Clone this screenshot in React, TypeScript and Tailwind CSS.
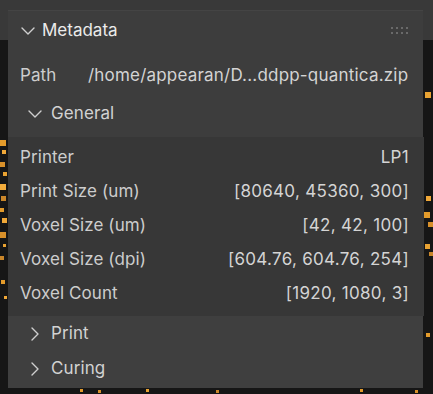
import React from 'react';

const specks: [number, number, number, string][] = [
  // left strip
  [0, 140, 6, '#e39b2b'], [2, 150, 4, '#f0a838'], [0, 162, 5, '#d8902a'], [3, 172, 4, '#e8a232'],
  [0, 184, 6, '#f2ac3c'], [1, 196, 5, '#c9862a'], [0, 208, 4, '#e39b2b'], [2, 218, 5, '#f0a838'],
  [0, 232, 6, '#d8902a'], [3, 244, 3, '#e8a232'], [0, 256, 4, '#c9862a'], [1, 280, 4, '#e39b2b'],
  [4, 296, 3, '#f0a838'],
  // right strip
  [425, 92, 6, '#e8a232'], [426, 196, 5, '#f0a838'], [424, 212, 6, '#e39b2b'], [428, 222, 5, '#d8902a'],
  [425, 244, 5, '#e8a232'], [429, 252, 4, '#c9862a'], [426, 333, 4, '#e39b2b'],
  // bottom
  [80, 389, 3, '#e39b2b'], [98, 390, 3, '#d8902a'], [146, 389, 3, '#e8a232'], [216, 390, 3, '#c9862a'],
  [360, 389, 3, '#e39b2b'], [415, 390, 3, '#d8902a'],
];

function Chevron({ open }: { open: boolean }) {
  return open ? (
    <svg width="14" height="8" viewBox="0 0 14 8" className="shrink-0">
      <path d="M1 1 L7 7 L13 1" fill="none" stroke="#cfcfcf" strokeWidth="1.4" strokeLinecap="round" strokeLinejoin="round" />
    </svg>
  ) : (
    <svg width="8" height="14" viewBox="0 0 8 14" className="shrink-0">
      <path d="M1 1 L7 7 L1 13" fill="none" stroke="#cfcfcf" strokeWidth="1.4" strokeLinecap="round" strokeLinejoin="round" />
    </svg>
  );
}

function Grip() {
  return (
    <div className="grid grid-cols-4 gap-x-[3px] gap-y-[3px]">
      {Array.from({ length: 8 }).map((_, i) => (
        <div key={i} className="w-[2px] h-[2px] rounded-full bg-[#7a7a7a]" />
      ))}
    </div>
  );
}

const rows: [string, string][] = [
  ['Printer', 'LP1'],
  ['Print Size (um)', '[80640, 45360, 300]'],
  ['Voxel Size (um)', '[42, 42, 100]'],
  ['Voxel Size (dpi)', '[604.76, 604.76, 254]'],
  ['Voxel Count', '[1920, 1080, 3]'],
];

export default function App() {
  return (
    <div
      className="relative w-[433px] h-[394px] overflow-hidden bg-[#161616] text-[17px] tracking-[0.1px] text-[#d2d2d2]"
      style={{ fontFamily: 'Inter, "Noto Sans", sans-serif' }}
    >
      {/* viewport header strip */}
      <div className="absolute left-0 top-0 w-[433px] h-[40px] bg-[#393939]" />
      {specks.map(([x, y, s, c], i) => (
        <div key={i} className="absolute" style={{ left: x, top: y, width: s, height: s, backgroundColor: c }} />
      ))}

      <div className="relative pt-[10px] pl-[8px] pr-[10px]">
        <div className="flex flex-col bg-[#3d3d3d] h-[378px]">
          {/* Header */}
          <div className="h-[40px] flex items-center pl-[13px] pr-[15px] border-t border-[#444444]">
            <Chevron open />
            <span className="ml-[7px] text-[17px] tracking-normal text-[#ebebeb]">Metadata</span>
            <div className="ml-auto">
              <Grip />
            </div>
          </div>

          <div className="pt-[7px] pb-[4px]">
            <div className="h-[38px] flex items-center pl-[12px]">
              <span className="w-[68px] text-[#cdcdcd]">Path</span>
              <span className="text-[#d4d4d4] tracking-[0.2px]">/home/appearan/D...ddpp-quantica.zip</span>
            </div>
            <div className="h-[38px] flex items-center pl-[20px]">
              <Chevron open />
              <span className="ml-[9px] text-[#d2d2d2]">General</span>
            </div>
          </div>

          <div className="bg-[#373737] pt-[4px] pb-[5px] mr-[-1px]">
            {rows.map(([k, v]) => (
              <div key={k} className="h-[34px] flex items-center justify-between pl-[12px] pr-[15px]">
                <span className="text-[#cdcdcd]">{k}</span>
                <span className="text-[#d4d4d4] tracking-[0.3px]">{v}</span>
              </div>
            ))}
          </div>

          <div className="flex-1 bg-[#3f3f3f] pt-[2px]">
            <div className="h-[32px] flex items-center pl-[23px]">
              <Chevron open={false} />
              <span className="ml-[12px]">Print</span>
            </div>
            <div className="h-[38px] flex items-center pl-[23px]">
              <Chevron open={false} />
              <span className="ml-[12px]">Curing</span>
            </div>
          </div>
        </div>
      </div>
    </div>
  );
}
